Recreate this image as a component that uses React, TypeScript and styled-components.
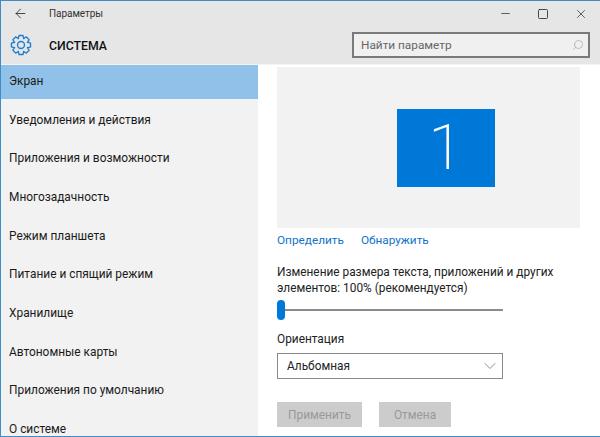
import styled, { createGlobalStyle } from 'styled-components';
import { ArrowLeft, Minus, Square, X, Search, ChevronDown } from 'lucide-react';

const menuItems = [
  'Экран',
  'Уведомления и действия',
  'Приложения и возможности',
  'Многозадачность',
  'Режим планшета',
  'Питание и спящий режим',
  'Хранилище',
  'Автономные карты',
  'Приложения по умолчанию',
  'О системе',
];

// outline of an 8-tooth cog around (12, 12)
const cogPath = () => {
  const points: string[] = [];
  for (let i = 0; i < 8; i++) {
    const a = (i * Math.PI) / 4 - Math.PI / 2;
    [
      [7.6, -0.42],
      [10.6, -0.2],
      [10.6, 0.2],
      [7.6, 0.42],
    ].forEach(([r, d]) => {
      const x = 12 + r * Math.cos(a + d);
      const y = 12 + r * Math.sin(a + d);
      points.push(`${x.toFixed(2)} ${y.toFixed(2)}`);
    });
  }
  return `M${points.join('L')}Z`;
};

const CogIcon = () => (
  <svg width="22" height="22" viewBox="0 0 24 24" fill="none" stroke="currentColor" strokeWidth="1.5" strokeLinejoin="round">
    <path d={cogPath()} />
    <circle cx="12" cy="12" r="3.8" />
  </svg>
);

const App = () => {
  return (
    <Window>
      <GlobalStyle />
      <Header>
        <TitleBar>
          <BackButton>
            <ArrowLeft size={15} strokeWidth={1.2} />
          </BackButton>
          <WindowTitle>Параметры</WindowTitle>
          <WindowControls>
            <Minus size={13} strokeWidth={1.3} />
            <Square size={12} strokeWidth={1.6} />
            <X size={14} strokeWidth={1.2} />
          </WindowControls>
        </TitleBar>
        <SectionBar>
          <SectionIcon>
            <CogIcon />
          </SectionIcon>
          <SectionTitle>СИСТЕМА</SectionTitle>
          <SearchBox>
            <SearchText>Найти параметр</SearchText>
            <SearchIcon>
              <Search size={12} strokeWidth={1} color="#8a8a8a" />
            </SearchIcon>
          </SearchBox>
        </SectionBar>
      </Header>
      <Body>
        <Sidebar>
          {menuItems.map((item, i) => (
            <MenuItem key={item} $active={i === 0}>
              {item}
            </MenuItem>
          ))}
        </Sidebar>
        <Content>
          <DisplayPreview>
            <Monitor>1</Monitor>
          </DisplayPreview>
          <Links>
            <LinkText>Определить</LinkText>
            <LinkText>Обнаружить</LinkText>
          </Links>
          <ScaleLabel>
            Изменение размера текста, приложений и других
            <br />
            элементов: 100% (рекомендуется)
          </ScaleLabel>
          <Slider>
            <SliderThumb />
          </Slider>
          <FieldLabel>Ориентация</FieldLabel>
          <Select>
            Альбомная
            <ChevronDown size={20} strokeWidth={0.8} color="#555" />
          </Select>
          <Buttons>
            <DisabledButton $width={85}>Применить</DisabledButton>
            <DisabledButton $width={72}>Отмена</DisabledButton>
          </Buttons>
        </Content>
      </Body>
    </Window>
  );
};

const GlobalStyle = createGlobalStyle`
  html, body {
    margin: 0;
    padding: 0;
    background: #ffffff;
  }
  body {
    font-family: 'Roboto', 'Open Sans', sans-serif;
    color: #1a1a1a;
  }
`;

const Window = styled.div`
  box-sizing: border-box;
  width: 600px;
  height: 437px;
  display: flex;
  flex-direction: column;
  overflow: hidden;
  border: 1px solid #3c8dc8;
  border-right: 0;
  background: #ffffff;
`;

const Header = styled.div`
  height: 63px;
  flex: none;
  background: #e6e6e6;
  border-bottom: 1px solid #f4f4f4;
`;

const TitleBar = styled.div`
  display: flex;
  align-items: center;
  height: 25px;
`;

const BackButton = styled.div`
  display: flex;
  width: 48px;
  padding-left: 12px;
  box-sizing: border-box;
  color: #111;
`;

const WindowTitle = styled.div`
  font-size: 10px;
  letter-spacing: -0.05px;
  color: #333;
`;

const WindowControls = styled.div`
  display: flex;
  align-items: center;
  gap: 25px;
  margin-left: auto;
  margin-right: 12px;
  color: #222;
`;

const SectionBar = styled.div`
  display: flex;
  align-items: center;
  height: 38px;
`;

const SectionIcon = styled.div`
  display: flex;
  width: 48px;
  padding-left: 9px;
  box-sizing: border-box;
  color: #1f7fce;
`;

const SectionTitle = styled.div`
  padding-top: 2px;
  font-size: 12.3px;
  font-weight: 500;
  color: #111;
`;

const SearchBox = styled.div`
  box-sizing: border-box;
  display: flex;
  align-items: center;
  justify-content: space-between;
  width: 238px;
  height: 26px;
  margin-left: auto;
  margin-right: 10px;
  padding: 0 4px 0 7px;
  border: 2px solid #7a7a7a;
  background: #f0f0f0;
`;

const SearchText = styled.span`
  font-size: 11.8px;
  color: #666;
`;

const SearchIcon = styled.span`
  display: flex;
  transform: scaleX(-1);
`;

const Body = styled.div`
  flex: 1;
  display: flex;
  min-height: 0;
`;

const Sidebar = styled.div`
  width: 257px;
  flex: none;
  background: #f2f2f2;
`;

const MenuItem = styled.div<{ $active: boolean }>`
  box-sizing: border-box;
  height: 38.67px;
  padding: 8px 0 0 8px;
  font-size: 11.9px;
  line-height: 17px;
  color: #1a1a1a;
  background: ${(p) => (p.$active ? 'linear-gradient(#91c0e8 34px, transparent 34px)' : 'transparent')};
`;

const Content = styled.div`
  flex: 1;
  padding: 2px 0 0 19px;
`;

const DisplayPreview = styled.div`
  box-sizing: border-box;
  width: 303px;
  height: 161px;
  padding: 0 0 0 34px;
  display: flex;
  align-items: center;
  justify-content: center;
  background: #f2f2f2;
`;

const Monitor = styled.div`
  width: 98px;
  height: 78px;
  display: flex;
  align-items: center;
  justify-content: center;
  background: #0078d7;
  color: #ffffff;
  font-size: 63px;
  font-weight: 200;
  line-height: 76px;
`;

const Links = styled.div`
  display: flex;
  gap: 17px;
  margin-top: 4px;
`;

const LinkText = styled.span`
  font-size: 11.8px;
  line-height: 17px;
  color: #0f74c8;
`;

const ScaleLabel = styled.div`
  margin-top: 16px;
  font-size: 11.85px;
  line-height: 15.5px;
  color: #222;
`;

const Slider = styled.div`
  position: relative;
  width: 226px;
  height: 20px;
  margin-top: 4px;
  display: flex;
  align-items: center;
  &::before {
    content: '';
    width: 100%;
    height: 1.5px;
    background: #8c8c8c;
  }
`;

const SliderThumb = styled.div`
  position: absolute;
  left: 0;
  top: 0;
  width: 8px;
  height: 20px;
  border-radius: 4px;
  background: #0078d7;
`;

const FieldLabel = styled.div`
  margin-top: 11px;
  font-size: 11.85px;
  line-height: 17px;
  color: #222;
`;

const Select = styled.div`
  box-sizing: border-box;
  width: 226px;
  height: 26px;
  margin-top: 5px;
  padding: 0 2px 0 9px;
  display: flex;
  align-items: center;
  justify-content: space-between;
  border: 1.5px solid #8a8a8a;
  font-size: 11.85px;
  color: #222;
`;

const Buttons = styled.div`
  display: flex;
  gap: 17px;
  margin-top: 23px;
`;

const DisabledButton = styled.div<{ $width: number }>`
  width: ${(p) => p.$width}px;
  height: 25px;
  display: flex;
  align-items: center;
  justify-content: center;
  background: #cccccc;
  color: #999999;
  font-size: 11.85px;
`;

export default App;
